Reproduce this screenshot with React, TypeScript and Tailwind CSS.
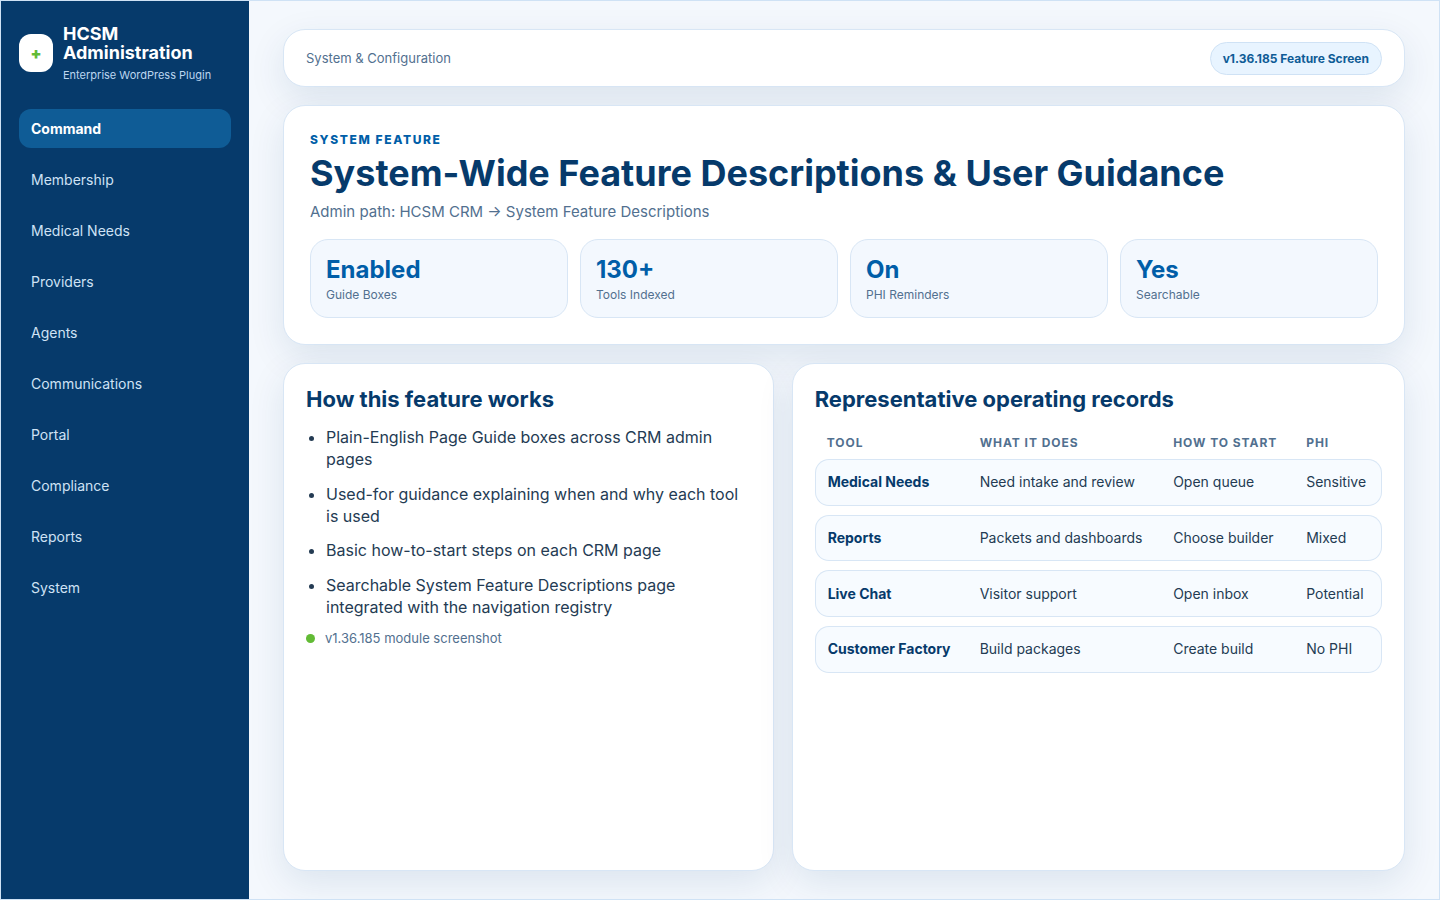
const navItems = ['Command', 'Membership', 'Medical Needs', 'Providers', 'Agents', 'Communications', 'Portal', 'Compliance', 'Reports', 'System'];

const stats = [
  { value: 'Enabled', label: 'Guide Boxes' },
  { value: '130+', label: 'Tools Indexed' },
  { value: 'On', label: 'PHI Reminders' },
  { value: 'Yes', label: 'Searchable' },
];

const bullets = [
  'Plain-English Page Guide boxes across CRM admin pages',
  'Used-for guidance explaining when and why each tool is used',
  'Basic how-to-start steps on each CRM page',
  'Searchable System Feature Descriptions page integrated with the navigation registry',
];

const records = [
  ['Medical Needs', 'Need intake and review', 'Open queue', 'Sensitive'],
  ['Reports', 'Packets and dashboards', 'Choose builder', 'Mixed'],
  ['Live Chat', 'Visitor support', 'Open inbox', 'Potential'],
  ['Customer Factory', 'Build packages', 'Create build', 'No PHI'],
];

const cardClass = 'bg-white border border-[#d8e6f5] rounded-[22px] shadow-[0_12px_36px_rgba(8,55,105,0.1)]';

export default function App() {
  return (
    <div className="w-[1440px] h-[900px] flex overflow-hidden border border-[#cfe2f5] bg-[#f4f8fd] font-['Inter',sans-serif] text-[#243b53]">
      {/* Sidebar */}
      <aside className="w-[248px] shrink-0 bg-[#063a6b] px-[18px] pt-[22px]">
        <div className="flex items-center gap-2.5 h-[60px]">
          <div className="w-[34px] h-[38px] shrink-0 rounded-xl bg-white flex items-center justify-center text-[#62bb35] font-black text-base">+</div>
          <div>
            <div className="text-white font-bold text-lg leading-[19px]">HCSM Administration</div>
            <div className="text-[#bcd6f0] text-[11px] leading-4 mt-[5px]">Enterprise WordPress Plugin</div>
          </div>
        </div>
        <nav className="mt-[26px] flex flex-col gap-3">
          {navItems.map((item, index) => (
            <div
              key={item}
              className={
                index === 0
                  ? 'h-[39px] flex items-center px-3 rounded-xl bg-[#0f5c96] text-white font-bold text-sm'
                  : 'h-[39px] flex items-center px-3 text-[#cfe2f5] text-sm'
              }
            >
              {item}
            </div>
          ))}
        </nav>
      </aside>

      {/* Main */}
      <main className="flex-1 min-w-0 px-[34px] pt-7 pb-7 flex flex-col gap-[18px]">
        <div className={`${cardClass} h-[58px] flex items-center justify-between px-[22px]`}>
          <span className="text-[13px] text-[#52708f] pt-px">System &amp; Configuration</span>
          <span className="h-[33px] flex items-center px-3 pt-px rounded-full bg-[#e8f4ff] border border-[#cfe2f5] text-[#0f5c96] font-bold text-xs">
            v1.36.185 Feature Screen
          </span>
        </div>

        <section className={`${cardClass} h-[240px] px-[26px] pt-[26px]`}>
          <div className="text-[#005ea8] font-extrabold text-xs leading-4 tracking-[0.135em]">SYSTEM FEATURE</div>
          <h1 className="text-[#063a6b] font-bold text-[36px] leading-[40px] mt-[5px]">System-Wide Feature Descriptions &amp; User Guidance</h1>
          <p className="text-[#52708f] text-[15px] leading-6 mt-[7px]">Admin path: HCSM CRM → System Feature Descriptions</p>
          <div className="grid grid-cols-4 gap-3 mt-[15px]">
            {stats.map((stat) => (
              <div key={stat.label} className="h-[79px] rounded-[18px] bg-[#f3f8fe] border border-[#d8e6f5] px-[15px] pt-[15px]">
                <div className="text-[#005ea8] font-bold text-2xl leading-[30px]">{stat.value}</div>
                <div className="text-[#52708f] text-xs leading-4 mt-[2px]">{stat.label}</div>
              </div>
            ))}
          </div>
        </section>

        <div className="flex-1 min-h-0 grid grid-cols-[.8fr_1fr] gap-[18px]">
          <section className={`${cardClass} px-[22px] pt-[20px]`}>
            <h2 className="text-[#063a6b] font-bold text-[22px] leading-[30px]">How this feature works</h2>
            <ul className="list-disc pl-5 mt-[11.8px] flex flex-col gap-3 text-[#243b53] text-base leading-[22.4px]">
              {bullets.map((bullet) => (
                <li key={bullet}>{bullet}</li>
              ))}
            </ul>
            <div className="flex items-center gap-[10px] mt-[10.2px] text-[13px] text-[#52708f]">
              <span className="w-[9px] h-[9px] rounded-full bg-[#62bb35]" />
              v1.36.185 module screenshot
            </div>
          </section>

          <section className={`${cardClass} px-[22px] pt-[20px]`}>
            <h2 className="text-[#063a6b] font-bold text-[22px] leading-[30px]">Representative operating records</h2>
            <table className="w-full mt-[12px] border-separate border-spacing-y-[9px] text-sm">
              <thead>
                <tr className="text-[#52708f] text-xs font-bold tracking-[0.08em] text-left">
                  <th className="w-[165px] pl-3 font-bold leading-[15px]">TOOL</th>
                  <th className="w-[193.5px] font-bold leading-[15px]">WHAT IT DOES</th>
                  <th className="w-[133px] font-bold leading-[15px]">HOW TO START</th>
                  <th className="font-bold leading-[15px]">PHI</th>
                </tr>
              </thead>
              <tbody>
                {records.map((row) => (
                  <tr key={row[0]} className="h-[46.67px]">
                    <td className="pl-3 bg-[#f7fbff] border-y border-l border-[#d8e6f5] rounded-l-[14px] font-bold text-[#063a6b]">{row[0]}</td>
                    <td className="bg-[#f7fbff] border-y border-[#d8e6f5]">{row[1]}</td>
                    <td className="bg-[#f7fbff] border-y border-[#d8e6f5]">{row[2]}</td>
                    <td className="bg-[#f7fbff] border-y border-r border-[#d8e6f5] rounded-r-[14px]">{row[3]}</td>
                  </tr>
                ))}
              </tbody>
            </table>
          </section>
        </div>
      </main>
    </div>
  );
}
